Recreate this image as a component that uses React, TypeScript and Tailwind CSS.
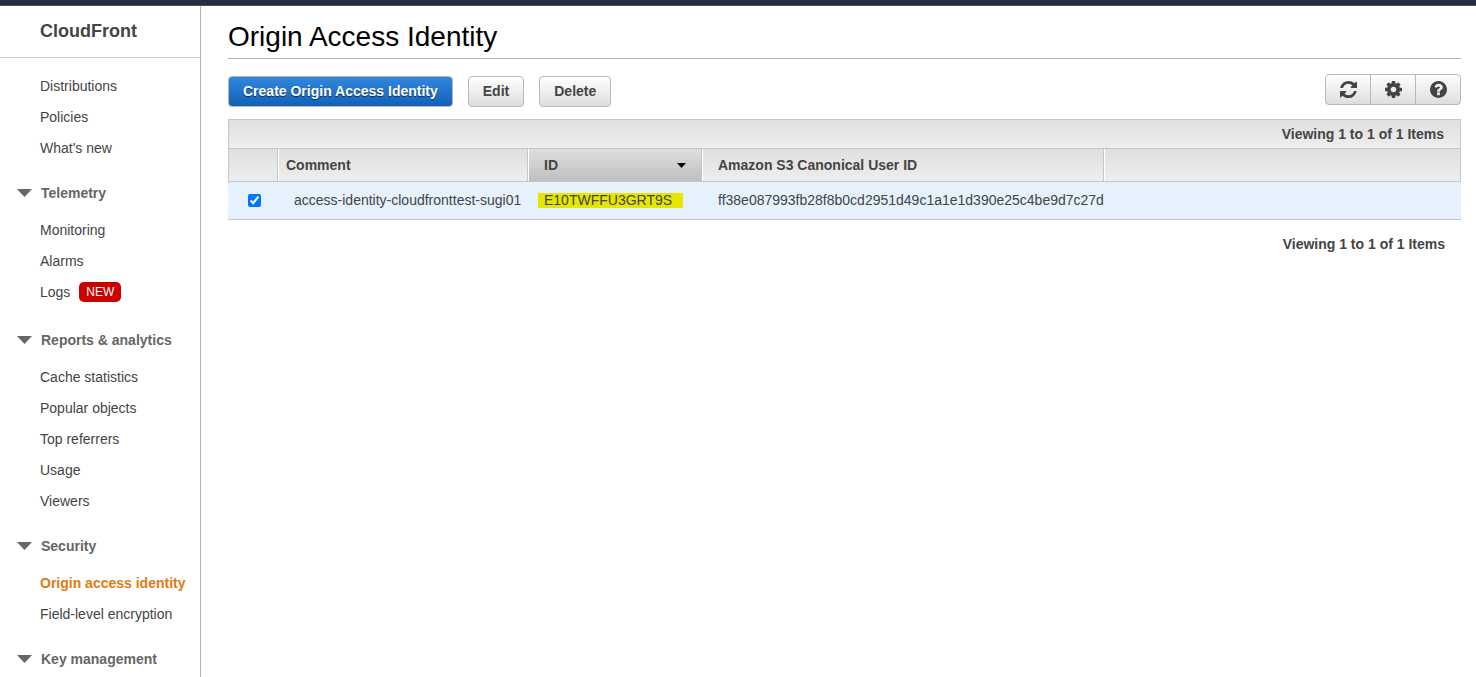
import React from 'react';

type NavItem = { label: string; isNew?: boolean; active?: boolean };
type NavGroup = { title: string; items: NavItem[] };

const topItems: NavItem[] = [
  { label: 'Distributions' },
  { label: 'Policies' },
  { label: "What's new" },
];

const groups: NavGroup[] = [
  {
    title: 'Telemetry',
    items: [{ label: 'Monitoring' }, { label: 'Alarms' }, { label: 'Logs', isNew: true }],
  },
  {
    title: 'Reports & analytics',
    items: [
      { label: 'Cache statistics' },
      { label: 'Popular objects' },
      { label: 'Top referrers' },
      { label: 'Usage' },
      { label: 'Viewers' },
    ],
  },
  {
    title: 'Security',
    items: [{ label: 'Origin access identity', active: true }, { label: 'Field-level encryption' }],
  },
  { title: 'Key management', items: [] },
];

const icons = {
  refresh:
    'M1639 1056q0 5-1 7-64 268-268 434.5t-478 166.5q-146 0-282.5-55t-243.5-157l-129 129q-19 19-45 19t-45-19-19-45v-448q0-26 19-45t45-19h448q26 0 45 19t19 45-19 45l-137 137q71 66 161 102t187 36q134 0 250-65t186-179q11-17 53-117 8-23 30-23h192q13 0 22.5 9.5t9.5 22.5zm25-800v448q0 26-19 45t-45 19h-448q-26 0-45-19t-19-45 19-45l138-138q-148-137-349-137-134 0-250 65t-186 179q-11 17-53 117-8 23-30 23h-199q-13 0-22.5-9.5t-9.5-22.5v-7q65-268 270-434.5t480-166.5q146 0 284 55.5t245 156.5l130-129q19-19 45-19t45 19 19 45z',
  cog: 'M1152 896q0-106-75-181t-181-75-181 75-75 181 75 181 181 75 181-75 75-181zm512-109v222q0 12-8 23t-20 13l-185 28q-19 54-39 91 35 50 107 138 10 12 10 25t-9 23q-27 37-99 108t-94 71q-12 0-26-9l-138-108q-44 23-91 38-16 136-29 186-7 28-36 28h-222q-14 0-24.5-8.5t-11.5-21.5l-28-184q-49-16-90-37l-141 107q-10 9-25 9-14 0-25-11-126-114-165-168-7-10-7-23 0-12 8-23 15-21 51-66.5t54-70.5q-27-50-41-99l-183-27q-13-2-21-12.5t-8-23.5v-222q0-12 8-23t19-13l186-28q14-46 39-92-40-57-107-138-10-12-10-24 0-10 9-23 26-36 98.5-107.5t94.5-71.5q13 0 26 10l138 107q44-23 91-38 16-136 29-186 7-28 36-28h222q14 0 24.5 8.5t11.5 21.5l28 184q49 16 90 37l142-107q9-9 24-9 13 0 25 10 129 119 165 170 7 8 7 22 0 12-8 23-15 21-51 66.5t-54 70.5q26 50 41 98l183 28q13 2 21 12.5t8 23.5z',
  help: 'M1024 1376v-192q0-14-9-23t-23-9h-192q-14 0-23 9t-9 23v192q0 14 9 23t23 9h192q14 0 23-9t9-23zm256-672q0-88-55.5-163t-138.5-116-170-41q-243 0-371 213-15 24 8 42l132 100q7 6 19 6 16 0 25-12 53-68 86-92 34-24 86-24 48 0 85.5 26t37.5 59q0 38-20 61t-68 45q-63 28-115.5 86.5t-52.5 125.5v36q0 14 9 23t23 9h192q14 0 23-9t9-23q0-19 21.5-49.5t54.5-49.5q32-18 49-28.5t46-35 44.5-48 28-60.5 12.5-81zm384 192q0 209-103 385.5t-279.5 279.5-385.5 103-385.5-103-279.5-279.5-103-385.5 103-385.5 279.5-279.5 385.5-103 385.5 103 279.5 279.5 103 385.5z',
};

function NavList({ items }: { items: NavItem[] }) {
  return (
    <ul>
      {items.map((item) => (
        <li key={item.label} className={item.isNew ? 'pb-[3px]' : ''}>
          <a
            href="#"
            className={`flex h-[31px] items-center pl-10 whitespace-nowrap ${item.active ? 'font-bold text-[#e07b10]' : ''}`}
          >
            {item.label}
            {item.isNew && (
              <span className="ml-[9px] flex h-5 items-center rounded-[5px] bg-[#cc0000] px-[7px] text-[12px] text-white">NEW</span>
            )}
          </a>
        </li>
      ))}
    </ul>
  );
}

function Sidebar() {
  return (
    <nav className="w-[201px] shrink-0 border-r border-[#b3b3b3]">
      <div className="flex h-[52px] items-center border-b border-[#ccc] pb-[2px] pl-10 text-[18px] font-bold">CloudFront</div>
      <div className="pt-3">
        <NavList items={topItems} />
        {groups.map((group) => (
          <section key={group.title}>
            <h2 className="mt-[14px] mb-[6px] font-bold text-[#666]">
              <button type="button" className="flex h-[31px] items-center gap-[9px] pl-[17px] whitespace-nowrap">
                <svg width="15" height="8" viewBox="0 0 15 8" fill="currentColor" aria-hidden="true">
                  <path d="M0 0h15L7.5 8z" />
                </svg>
                {group.title}
              </button>
            </h2>
            <NavList items={group.items} />
          </section>
        ))}
      </div>
    </nav>
  );
}

function IconButton({ label, path }: { label: string; path: string }) {
  return (
    <button type="button" aria-label={label} className="flex w-[45px] items-center justify-center border-l border-[#b8b8b8] first:w-11 first:border-l-0">
      <svg width="17" height="17" viewBox="128 128 1536 1536" fill="currentColor" aria-hidden="true">
        <path d={path} />
      </svg>
    </button>
  );
}

function Toolbar() {
  const button = 'h-[31px] rounded-[4px] border border-[#b8b8b8] bg-linear-to-b px-[14px] pb-[2px] font-bold whitespace-nowrap';
  return (
    <div className="flex items-start justify-between pt-[15px]">
      <div className="flex gap-[15px] pt-[2px]">
        <button type="button" className={`${button} from-[#3087df] to-[#1261b8] text-white text-shadow-[0_1px_1px_rgba(0,0,0,0.6)]`}>
          Create Origin Access Identity
        </button>
        <button type="button" className={`${button} from-white to-[#dedede]`}>Edit</button>
        <button type="button" className={`${button} from-white to-[#dedede]`}>Delete</button>
      </div>
      <div className="flex h-[31px] rounded-[4px] border border-[#b8b8b8] bg-linear-to-b from-white to-[#dedede]">
        <IconButton label="Refresh" path={icons.refresh} />
        <IconButton label="Settings" path={icons.cog} />
        <IconButton label="Help" path={icons.help} />
      </div>
    </div>
  );
}

function IdentityTable() {
  const cell = 'border-r border-r-[#c6c6c6] shadow-[inset_1px_0_0_#fff]';
  const header = 'bg-linear-to-b from-[#dfdfdf] to-[#eee]';
  return (
    <div className="mt-3">
      <div className={`flex h-[30px] items-center justify-end border border-[#c6c6c6] pr-4 font-bold ${header}`}>
        Viewing 1 to 1 of 1 Items
      </div>
      <table className="w-full table-fixed border-separate border-spacing-0 text-left">
        <colgroup>
          <col className="w-[50px]" />
          <col className="w-[250px]" />
          <col className="w-[174px]" />
          <col className="w-[402px]" />
          <col />
        </colgroup>
        <thead>
          <tr className="h-[33px] [&>*]:border-b [&>*]:border-b-[#c6c6c6]">
            <td className={`border-r border-l border-r-[#c6c6c6] border-l-[#c6c6c6] ${header}`} />
            <th scope="col" className={`pl-2 ${cell} ${header}`}>Comment</th>
            <th scope="col" aria-sort="descending" className={`bg-linear-to-b from-[#dedede] to-[#bfbfbf] pr-[15px] pl-4 ${cell}`}>
              <button type="button" className="flex w-full items-center justify-between">
                ID
                <svg width="9" height="5" viewBox="0 0 9 5" fill="#000" aria-hidden="true">
                  <path d="M0 0h9L4.500 5z" />
                </svg>
              </button>
            </th>
            <th scope="col" className={`pl-4 ${cell} ${header}`}>Amazon S3 Canonical User ID</th>
            <td className={`${cell} ${header}`} />
          </tr>
        </thead>
        <tbody>
          <tr className="h-[38px] bg-[#e5f1fd] whitespace-nowrap [&>*]:border-b [&>*]:border-b-[#c6c6c6]">
            <td className="pl-5">
              <input type="checkbox" defaultChecked aria-label="Select access-identity-cloudfronttest-sugi01" className="block size-[13px] accent-[#0075ff]" />
            </td>
            <td className="pb-[2px] pl-4">access-identity-cloudfronttest-sugi01</td>
            <td className="pl-[10px]">
              <mark className="block w-[145px] bg-[#e6e600] pl-[6px] leading-[15px] text-[#444]">E10TWFFU3GRT9S</mark>
            </td>
            <td className="pb-[2px] pl-4">ff38e087993fb28f8b0cd2951d49c1a1e1d390e25c4be9d7c27d</td>
            <td />
          </tr>
        </tbody>
      </table>
      <p className="pt-[14px] pr-4 text-right font-bold">Viewing 1 to 1 of 1 Items</p>
    </div>
  );
}

export default function App() {
  return (
    <div className="flex min-h-screen flex-col bg-white font-['Liberation_Sans',Arial,sans-serif] text-[14px] leading-5 text-[#444]">
      <header className="h-[6px] border-b border-[#4c4a5c] bg-[#232f3e]" />
      <div className="flex grow">
        <Sidebar />
        <main className="min-w-0 grow pr-[15px] pl-[27px]">
          <h1 className="flex h-[53px] items-center border-b border-[#b3b3b3] pt-4 pb-[6px] text-[28px] text-black">Origin Access Identity</h1>
          <Toolbar />
          <IdentityTable />
        </main>
      </div>
    </div>
  );
}
